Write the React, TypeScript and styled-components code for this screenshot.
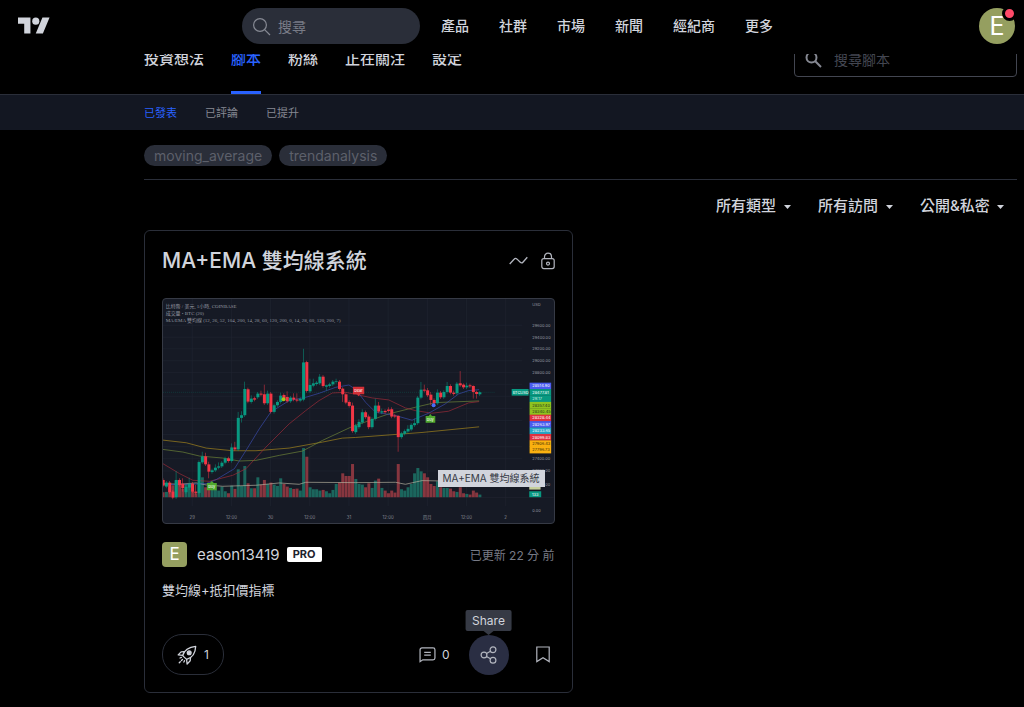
import React from "react";
import styled, { createGlobalStyle } from "styled-components";

const GlobalStyle = createGlobalStyle`
  *, *::before, *::after { box-sizing: border-box; }
  body {
    margin: 0;
    background: #000;
    color: #d1d4dc;
    font-family: Inter, "Noto Sans CJK TC", sans-serif;
    font-size: 14px;
  }
  button, input, select { font: inherit; color: inherit; }
  a { color: inherit; text-decoration: none; }
`;

/* ---------- top bar ---------- */

const Header = styled.header`
  position: sticky;
  top: 0;
  z-index: 10;
  display: flex;
  align-items: center;
  height: 54px;
  padding: 0 9px 2px 18px;
  background: #000;
`;

const LogoLink = styled.a`
  display: flex;
  width: 224px;
  flex: none;
`;

const HeaderSearch = styled.label`
  display: flex;
  align-items: center;
  gap: 7px;
  width: 178px;
  height: 36px;
  flex: none;
  padding: 0 12px 0 10px;
  border-radius: 18px;
  background: #2a2e39;
  color: #868993;
`;

const SearchInput = styled.input<{ $dim?: boolean }>`
  flex: 1;
  min-width: 0;
  padding: 0;
  border: 0;
  outline: 0;
  background: transparent;
  font-size: 14px;
  &::placeholder {
    color: ${(p) => (p.$dim ? "#434651" : "#787b86")};
    opacity: 1;
  }
`;

const MainNav = styled.nav`
  display: flex;
  gap: 30px;
  margin-left: 21px;
  white-space: nowrap;
`;

const NavLink = styled.a`
  font-size: 14px;
  font-weight: 500;
  line-height: 20px;
`;

const Account = styled.button`
  position: relative;
  width: 36px;
  height: 36px;
  flex: none;
  margin-left: auto;
  padding: 0;
  border: 0;
  border-radius: 50%;
  background: #959f60;
  color: #fff;
  font-size: 25px;
  line-height: 36px;
`;

const Badge = styled.span`
  position: absolute;
  top: -2px;
  right: -2px;
  width: 15px;
  height: 15px;
  border: 3px solid #000;
  border-radius: 50%;
  background: #ff4a68;
`;

/* ---------- profile tabs ---------- */

const ProfileBar = styled.div`
  display: flex;
  justify-content: space-between;
  align-items: center;
  height: 71px;
  margin-top: -30px;
  padding: 0 7px 0 144px;
  border-bottom: 1px solid #2a2e39;
`;

const Tabs = styled.nav`
  display: flex;
  align-self: stretch;
  gap: 27px;
  white-space: nowrap;
`;

const Tab = styled.a<{ $active?: boolean }>`
  display: flex;
  align-items: center;
  border-bottom: 3px solid ${(p) => (p.$active ? "#2962ff" : "transparent")};
  color: ${(p) => (p.$active ? "#2962ff" : "#d1d4dc")};
  font-size: 15px;
  font-weight: 500;
`;

const ScriptSearch = styled.label`
  display: flex;
  align-items: center;
  gap: 12px;
  width: 223px;
  height: 36px;
  padding: 0 10px;
  border: 1px solid #434651;
  border-radius: 4px;
  color: #868993;
`;

const SubTabs = styled.nav`
  display: flex;
  align-items: center;
  gap: 28px;
  height: 35px;
  padding: 0 144px 2px;
  background: #131722;
`;

const SubTab = styled.a<{ $active?: boolean }>`
  color: ${(p) => (p.$active ? "#2962ff" : "#868993")};
  font-size: 11px;
`;

/* ---------- content ---------- */

const Content = styled.main`
  padding: 0 7px 14px 144px;
`;

const TagList = styled.div`
  display: flex;
  gap: 7px;
  padding: 15px 0 13px;
  border-bottom: 1px solid #2a2e39;
`;

const Tag = styled.a`
  padding: 0 10px;
  border-radius: 11px;
  background: #2a2e39;
  color: #5d606b;
  font-size: 14px;
  line-height: 21px;
`;

const Filters = styled.div`
  display: flex;
  justify-content: flex-end;
  align-items: center;
  gap: 27px;
  height: 50px;
  padding-right: 13px;
`;

const FilterLabel = styled.label`
  display: flex;
  align-items: center;
  gap: 7px;
`;

const FilterSelect = styled.select`
  appearance: none;
  padding: 0;
  border: 0;
  background: transparent;
  font-size: 15px;
  font-weight: 500;
`;

const CardGrid = styled.div`
  display: grid;
  grid-template-columns: 1fr 1fr;
  gap: 16px;
`;

const Card = styled.article`
  padding: 17px;
  border: 1px solid #2a2e39;
  border-radius: 6px;
`;

const CardHead = styled.div`
  display: flex;
  align-items: center;
  gap: 13px;
  height: 26px;
  margin-bottom: 24px;
`;

const CardTitle = styled.h2`
  flex: 1;
  margin: 0;
  font-size: 21px;
  font-weight: 500;
  line-height: 26px;
`;

const ChartFrame = styled.div`
  position: relative;
  border: 1px solid #363a45;
  border-radius: 4px;
  overflow: hidden;
  background: #161a25;
  svg { display: block; width: 100%; height: auto; }
`;

const ChartTip = styled.span`
  position: absolute;
  right: 9px;
  bottom: 36px;
  padding: 0 5px;
  background: #d1d4dc;
  color: #363a45;
  font-size: 10px;
  line-height: 17px;
`;

const Author = styled.div`
  display: flex;
  align-items: center;
  margin-top: 18px;
`;

const AuthorAvatar = styled.span`
  width: 25px;
  height: 25px;
  border-radius: 4px;
  background: #959f60;
  color: #fff;
  font-size: 17px;
  line-height: 25px;
  text-align: center;
`;

const AuthorName = styled.a`
  margin: 0 7px 0 10px;
  font-size: 15px;
  line-height: 25px;
`;

const ProBadge = styled.span`
  padding: 0 6px;
  border-radius: 2px;
  background: #fff;
  color: #1e222d;
  font-size: 11px;
  font-weight: 700;
  line-height: 15px;
`;

const Updated = styled.time`
  margin-left: auto;
  color: #787b86;
  font-size: 12px;
`;

const Description = styled.p`
  margin: 13px 0 34px;
  font-size: 13px;
  line-height: 20px;
`;

const Actions = styled.div`
  display: flex;
  align-items: center;
`;

const BoostButton = styled.button`
  display: flex;
  align-items: center;
  gap: 7px;
  height: 41px;
  margin-right: auto;
  padding: 0 14px;
  border: 1px solid #2a2e39;
  border-radius: 20px;
  background: transparent;
  font-size: 12px;
`;

const PlainButton = styled.button`
  display: flex;
  align-items: center;
  justify-content: center;
  gap: 6px;
  min-width: 24px;
  height: 28px;
  padding: 0;
  border: 0;
  background: transparent;
  font-size: 12px;
`;

const ShareWrap = styled.div`
  position: relative;
  margin: 0 22px 0 19px;
`;

const ShareButton = styled.button`
  display: flex;
  align-items: center;
  justify-content: center;
  width: 40px;
  height: 40px;
  padding: 0;
  border: 0;
  border-radius: 50%;
  background: #2a2e43;
`;

const ShareTip = styled.span`
  position: absolute;
  left: 50%;
  bottom: 44px;
  padding: 0 7px;
  border-radius: 2px;
  background: #363a45;
  font-size: 12px;
  line-height: 21px;
  transform: translateX(-50%);
  &::after {
    content: "";
    position: absolute;
    left: 50%;
    top: 100%;
    margin-left: -5px;
    border: 5px solid transparent;
    border-top: 4px solid #363a45;
    border-bottom: 0;
  }
`;

/* ---------- chart ---------- */

const UP = "#089981";
const DOWN = "#f23645";
const STEP = 118 / 12;
const BASELINE = 597;

// [top, bottom, direction, volume, wick top, wick bottom]
type Bar = [number, number, 0 | 1, number, number?, number?];
const bars: Bar[] = [
  [545, 562, 0, 15], [553, 565, 1, 16], [553, 582, 0, 30], [580, 598, 0, 36], [545, 597, 1, 50, 518], [545, 560, 0, 42], [556, 570, 0, 25, 540, 580],
  [566, 582, 1, 40], [556, 568, 1, 38, 538, 575], [556, 580, 0, 40], [580, 584, 0, 12, 560], [491, 584, 1, 40], [474, 492, 1, 60, 460],
  [474, 498, 0, 30, 463], [498, 520, 0, 40, 490, 540], [516, 521, 1, 22], [508, 516, 1, 22, 498], [504, 508, 1, 20, 492], [493, 504, 1, 32],
  [480, 493, 1, 18], [480, 488, 0, 12], [447, 488, 1, 35, 435], [447, 453, 0, 25, 430], [358, 453, 1, 84, 340], [350, 358, 1, 34, 338, 372],
  [271, 350, 1, 94, 249], [272, 309, 0, 42], [300, 310, 1, 27, 290], [299, 303, 0, 27], [285, 296, 1, 60], [285, 288, 0, 38, 276], [287, 314, 0, 52, 258],
  [285, 314, 1, 40, 276], [285, 340, 0, 44], [320, 340, 1, 38], [310, 320, 1, 34], [291, 310, 1, 57, 282], [289, 300, 0, 40], [295, 308, 0, 32, 278],
  [297, 308, 1, 28], [297, 303, 0, 25, 284], [303, 306, 0, 26, 284], [301, 306, 1, 20], [191, 303, 1, 148, 150], [190, 277, 0, 122, 186],
  [259, 278, 1, 30, 240], [254, 261, 1, 24, 240], [252, 256, 1, 24], [234, 254, 1, 20, 226], [234, 262, 0, 22], [260, 264, 1, 18, 258, 276],
  [257, 262, 1, 12], [249, 257, 1, 22, 244], [248, 250, 1, 40, 240], [249, 271, 0, 44], [270, 287, 0, 72, 266, 310], [287, 312, 0, 64], [310, 322, 0, 64],
  [321, 398, 0, 100, 312], [381, 401, 1, 55], [370, 386, 1, 40, 362], [341, 372, 1, 38, 332], [341, 356, 0, 30], [354, 386, 0, 42, 348, 392],
  [361, 386, 1, 28], [321, 361, 1, 50, 300], [321, 339, 0, 56, 310], [338, 342, 1, 28, 330], [337, 341, 0, 20], [333, 337, 0, 12, 326],
  [332, 354, 0, 20, 326], [351, 354, 0, 14], [352, 416, 0, 100, 350, 460], [405, 416, 1, 24], [398, 406, 1, 20], [391, 399, 1, 30, 380],
  [379, 393, 1, 40], [374, 380, 1, 72, 360], [297, 374, 1, 88], [273, 297, 1, 78, 250], [273, 276, 0, 72, 258], [275, 290, 0, 60, 268],
  [288, 304, 0, 40, 280, 320], [304, 314, 0, 34], [282, 314, 1, 48, 272], [282, 296, 0, 30], [280, 296, 1, 28], [262, 280, 1, 28, 250],
  [262, 282, 0, 26], [282, 286, 0, 18, 276], [255, 284, 1, 16], [254, 260, 0, 30, 217], [258, 266, 0, 12, 254], [261, 266, 1, 10, 252],
  [260, 263, 0, 8], [262, 280, 0, 20, 260, 300], [280, 286, 0, 14, 276, 300], [281, 287, 1, 8, 278],
];

const gridRows = [79, 115, 150, 186, 221, 257, 293, 330, 366, 408, 445, 481, 518, 558];
const timeLabels = ["29", "12:00", "30", "12:00", "31", "12:00", "四月", "12:00", "2"];
const priceLabels: [string, number][] = [
  ["USD", 18], ["29600.00", 79], ["29400.00", 115], ["29200.00", 150], ["29000.00", 186], ["28800.00", 221],
  ["27400.00", 481], ["27200.00", 518], ["27000.00", 558], ["0.00", 636],
];
const priceTags: [string, string, string][] = [
  ["28514.90", "#4a5cf0", "#fff"], ["28477.81", UP, "#fff"], ["29:17", UP, "#cdeee6"], ["28357.40", "#8fc31f", "#26331a"],
  ["28340.45", "#8fc31f", "#26331a"], ["28328.44", "#e0313f", "#fff"], ["28263.97", "#4a5cf0", "#fff"], ["28233.65", "#26a5c4", "#fff"],
  ["28099.83", "#e0313f", "#fff"], ["27906.43", "#fbb110", "#3a2c08"], ["27796.73", "#fbb110", "#3a2c08"],
];

function Chart() {
  return (
    <svg viewBox="0 0 1176 675" role="img" aria-label="MA+EMA 雙均線系統" fontFamily="Inter, 'Noto Sans CJK TC', sans-serif">
      <g stroke="#202431" strokeWidth="2">
        {gridRows.map((y) => <line key={y} x1="0" x2="1082" y1={y} y2={y} />)}
        {timeLabels.map((_, i) => <line key={i} x1={88 + i * 118} x2={88 + i * 118} y1="0" y2="624" />)}
        <line x1="0" x2="1176" y1="598" y2="598" />
      </g>
      <line x1="0" x2="1000" y1="281" y2="281" stroke={UP} strokeWidth="2" strokeDasharray="2 4" opacity="0.5" />

      {bars.map(([, , up, vol], i) => (
        <rect key={i} x={i * STEP - 4} y={BASELINE - vol} width="9" height={vol} fill={up ? "#1b665d" : "#87363f"} />
      ))}
      <g fill="none" strokeWidth="2" strokeLinejoin="round">
        <path stroke="#b8b4a0" d="M0 556L50 558L100 554L130 560L180 564L280 561L350 554L410 558L430 552L580 553L700 552L730 558L780 547L952 550" />
        <path stroke="#a98a1c" d="M0 425L70 433L130 449L210 457L280 457L380 449L480 431L540 419L580 417L780 402L952 385" />
        <path stroke="#71883a" d="M0 453L60 461L110 473L180 479L230 488L280 486L350 471L420 458L480 426L570 384L680 346L760 326L820 312L952 307" />
        <path stroke="#a12c3a" d="M0 496L50 526L90 546L140 549L210 531L250 511L310 446L380 376L430 336L470 306L510 283L550 281L580 287L630 298L680 304L730 328L760 336L810 344L860 338L920 313L952 309" />
        <path stroke="#3b4db0" d="M0 559L80 558L130 556L160 544L215 511L250 456L290 391L325 340L380 306L430 296L470 284L520 266L560 259L580 272L610 311L640 341L700 351L750 365L800 344L850 316L890 286L920 276L952 273" />
      </g>
      {bars.map(([top, bottom, up, , hi, lo], i) => (
        <g key={i} fill={up ? UP : DOWN}>
          <rect x={i * STEP - 1} y={hi ?? top - 5} width="2" height={(lo ?? bottom + 5) - (hi ?? top - 5)} opacity="0.75" />
          <rect x={i * STEP - 4} y={top} width="9" height={bottom - top} />
        </g>
      ))}

      <circle cx="363" cy="302" r="6" fill="#a5c51a" />
      <circle cx="815" cy="320" r="6" fill="#4a6cf7" />
      <g fontSize="12" fill="#fff" textAnchor="middle">
        <path d="M132 554h9l6-6 6 6h9v22h-30z" fill="#4fa82e" />
        <text x="147" y="570">buy</text>
        <path d="M791 352h9l5-6 5 6h10v21h-29z" fill="#4fa82e" />
        <text x="805" y="367">buy</text>
        <path d="M572 264h34v23h-12l-5 6-5-6h-12z" fill="#d32f36" />
        <text x="589" y="280">bear</text>
      </g>

      <g fontFamily="'Liberation Serif', 'Noto Sans CJK TC', serif" fontSize="15" fill="#9598a1">
        <text x="8" y="28">比特幣 / 美元, 1小時, COINBASE</text>
        <text x="8" y="48">成交量 • BTC (20)</text>
        <text x="8" y="68">MA/EMA 雙均線 (12, 26, 52, 104, 200, 14, 28, 60, 120, 200, 0, 14, 28, 60, 120, 200, 7)</text>
      </g>
      <g fontSize="13" fill="#868993" textAnchor="middle">
        {timeLabels.map((t, i) => <text key={i} x={88 + i * 118} y="664">{t}</text>)}
      </g>
      <g fontSize="12" fill="#9598a1">
        {priceLabels.map(([t, y]) => <text key={t} x="1112" y={y + 4}>{t}</text>)}
      </g>
      <rect x="1050" y="271" width="51" height="20" fill={UP} />
      <text x="1053" y="285" fontSize="12" fill="#fff">BTCUSD</text>
      {priceTags.map(([t, bg, fg], i) => (
        <g key={t}>
          <rect x="1104" y={252 + i * 19.3} width="65" height="20" fill={bg} />
          <text x="1112" y={266 + i * 19.3} fontSize="12" fill={fg}>{t}</text>
        </g>
      ))}
      <rect x="1103" y="560" width="34" height="14" fill="#c6cf9c" />
      <rect x="1103" y="579" width="36" height="18" fill={UP} />
      <text x="1111" y="592" fontSize="12" fill="#fff">133</text>
    </svg>
  );
}

/* ---------- icons ---------- */

const Logo = () => (
  <svg width="32" height="25" viewBox="0 0 36 28" fill="#d1d4dc" aria-hidden="true">
    <path d="M14 22H7V11H0V4h14v18zM28 22h-8l7.5-18h8L28 22z" />
    <circle cx="20" cy="8" r="4" />
  </svg>
);

const ThinSearch = () => (
  <svg width="19" height="19" viewBox="0 0 19 19" fill="none" stroke="currentColor" strokeWidth="1.2" aria-hidden="true">
    <circle cx="8" cy="8" r="6.4" />
    <path d="M12.6 12.6L18 18" />
  </svg>
);

const BoldSearch = () => (
  <svg width="17" height="17" viewBox="0 0 17 17" fill="none" stroke="currentColor" strokeWidth="2" aria-hidden="true">
    <circle cx="6.5" cy="6.5" r="5" />
    <path d="M10.3 10.3L16 16" />
  </svg>
);

const Caret = () => (
  <svg width="7" height="7" viewBox="0 0 7 7" fill="#d1d4dc" aria-hidden="true"><path d="M0 3h7L3.5 7z" /></svg>
);

const Wave = () => (
  <svg width="19" height="14" viewBox="0 0 19 14" fill="none" stroke="#b2b5be" strokeWidth="1.3" aria-hidden="true">
    <path d="M.7 10L5.300 5c.7-.8 1.700-.8 2.500-.1l3.500 3.400c.8.8 1.900.7 2.600-.1l4.400-5" />
  </svg>
);

const Lock = () => (
  <svg width="14" height="18" viewBox="0 0 14 18" fill="none" stroke="#b2b5be" strokeWidth="1.2" aria-hidden="true">
    <rect x=".8" y="6.600" width="12.400" height="10" rx="2" />
    <path d="M3.500 6.600V4.700a3.500 3.500 0 0 1 7 0v1.900" />
    <circle cx="7" cy="11.600" r="1.500" />
  </svg>
);

const Rocket = () => (
  <svg width="20" height="20" viewBox="0 0 20 20" fill="none" stroke="#d1d4dc" strokeWidth="1.300" strokeLinejoin="round" strokeLinecap="round" aria-hidden="true">
    <path d="M5.600 10.600C7 5.700 10.700 2 18.700 1.300c-.3 7.700-4.200 11.800-9.100 13.100z" />
    <path d="M7.300 6.600L4.100 6.900 1.200 9.900l4.600.5M13.500 12.600l-.3 3.200-3.100 3.300-.5-4.700" />
    <circle cx="12.200" cy="7.800" r="1.900" fill="#d1d4dc" />
    <path d="M4.400 12.400l-2 .9M5.500 14.500l-3.300 3.300M7.500 15.700l-1 2.200" strokeDasharray="1.500 1.600" />
  </svg>
);

const Comment = () => (
  <svg width="17" height="16" viewBox="0 0 18 17" fill="none" stroke="#b2b5be" strokeWidth="1.300" aria-hidden="true">
    <path d="M1.100 15.600V3a2 2 0 0 1 2-2h11.800a2 2 0 0 1 2 2v8.600a2 2 0 0 1-2 2H4z" />
    <path d="M5.500 5.800h7M5.500 8.600h7" />
  </svg>
);

const Share = () => (
  <svg width="18" height="18" viewBox="0 0 18 18" fill="none" stroke="#b2b5be" strokeWidth="1.200" aria-hidden="true">
    <circle cx="4" cy="9" r="2.900" />
    <circle cx="13" cy="3.800" r="2.900" />
    <circle cx="13" cy="14.200" r="2.900" />
    <path d="M6.500 7.600L10.500 5.200M6.500 10.400L10.500 12.800" />
  </svg>
);

const Bookmark = () => (
  <svg width="14" height="17" viewBox="0 0 14 17" fill="none" stroke="#b2b5be" strokeWidth="1.200" aria-hidden="true">
    <path d="M.8 1h12.400v14.600L7 11.700.8 15.600z" />
  </svg>
);

/* ---------- page ---------- */

const navItems = ["產品", "社群", "市場", "新聞", "經紀商", "更多"];
const tabs = ["投資想法", "腳本", "粉絲", "正在關注", "設定"];
const subTabs = ["已發表", "已評論", "已提升"];
const tags = ["moving_average", "trendanalysis"];
const filters = ["所有類型", "所有訪問", "公開&私密"];

export default function App() {
  return (
    <>
      <GlobalStyle />
      <Header>
        <LogoLink href="#" aria-label="TradingView"><Logo /></LogoLink>
        <HeaderSearch>
          <ThinSearch />
          <SearchInput type="text" placeholder="搜尋" aria-label="搜尋" />
        </HeaderSearch>
        <MainNav>
          {navItems.map((t) => <NavLink key={t} href="#">{t}</NavLink>)}
        </MainNav>
        <Account type="button">E<Badge /></Account>
      </Header>

      <ProfileBar>
        <Tabs>
          {tabs.map((t) => <Tab key={t} href="#" $active={t === "腳本"}>{t}</Tab>)}
        </Tabs>
        <ScriptSearch>
          <BoldSearch />
          <SearchInput $dim type="text" placeholder="搜尋腳本" aria-label="搜尋腳本" />
        </ScriptSearch>
      </ProfileBar>
      <SubTabs>
        {subTabs.map((t, i) => <SubTab key={t} href="#" $active={i === 0}>{t}</SubTab>)}
      </SubTabs>

      <Content>
        <TagList>
          {tags.map((t) => <Tag key={t} href="#">{t}</Tag>)}
        </TagList>
        <Filters>
          {filters.map((t) => (
            <FilterLabel key={t}>
              <FilterSelect aria-label={t}><option>{t}</option></FilterSelect>
              <Caret />
            </FilterLabel>
          ))}
        </Filters>
        <CardGrid>
          <Card>
            <CardHead>
              <CardTitle>MA+EMA 雙均線系統</CardTitle>
              <Wave />
              <Lock />
            </CardHead>
            <ChartFrame>
              <Chart />
              <ChartTip>MA+EMA 雙均線系統</ChartTip>
            </ChartFrame>
            <Author>
              <AuthorAvatar>E</AuthorAvatar>
              <AuthorName href="#">eason13419</AuthorName>
              <ProBadge>PRO</ProBadge>
              <Updated>已更新 22 分 前</Updated>
            </Author>
            <Description>雙均線+抵扣價指標</Description>
            <Actions>
              <BoostButton type="button"><Rocket />1</BoostButton>
              <PlainButton type="button"><Comment />0</PlainButton>
              <ShareWrap>
                <ShareButton type="button" aria-label="Share"><Share /></ShareButton>
                <ShareTip>Share</ShareTip>
              </ShareWrap>
              <PlainButton type="button" aria-label="Bookmark"><Bookmark /></PlainButton>
            </Actions>
          </Card>
        </CardGrid>
      </Content>
    </>
  );
}
